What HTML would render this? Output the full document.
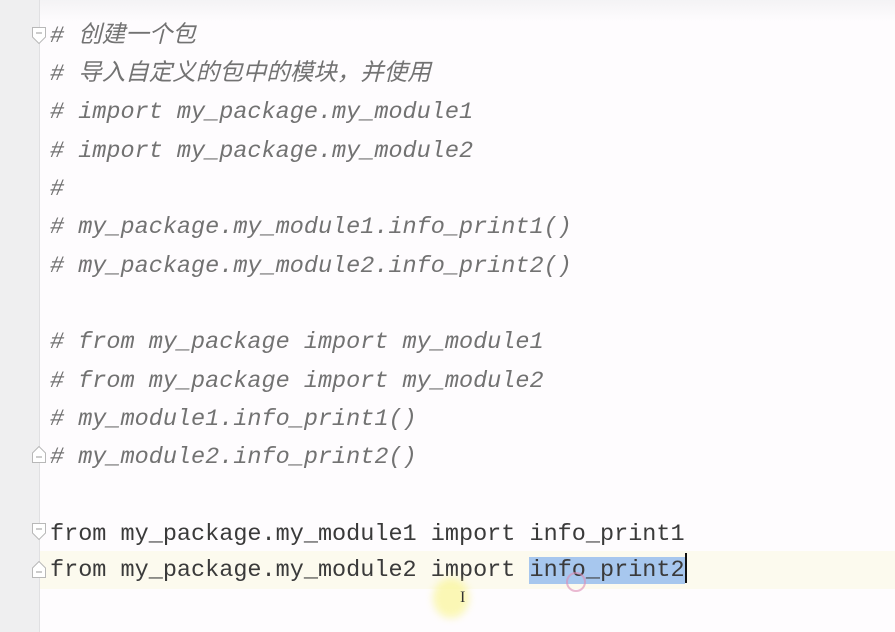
<!DOCTYPE html>
<html><head><meta charset="utf-8"><style>
html,body{margin:0;padding:0}
body{width:895px;height:632px;overflow:hidden;background:#fefcfe;position:relative;font-family:"Liberation Mono","Noto Sans CJK SC",monospace;}
.top{position:absolute;left:0;top:0;width:895px;height:22px;background:linear-gradient(#f4f3f5,#fefcfe)}
.gut{position:absolute;left:0;top:0;width:39px;height:632px;background:#efeff0;border-right:1px solid #e0e0e2}
.cur{position:absolute;left:40px;top:551px;width:855px;height:38px;background:#fcfaee}
.l{position:absolute;left:50px;height:38px;line-height:38px;font-size:23.5px;white-space:pre;color:#3a3a3a}
.c{color:#727272;font-style:italic}
.sel{background:#a7c7ee}
.caret{display:inline-block;width:2px;height:30px;background:#111;vertical-align:middle;margin-top:-4px}
.f{position:absolute;left:32px;width:14px;height:17px}
</style></head><body>
<div class="top"></div>
<div class="gut"></div>
<div class="cur"></div>
<svg class="f" style="top:27px" viewBox="0 0 14 17"><path d="M0.5 0.5H13.5V10L7 16.5L0.5 10Z" fill="#fff" stroke="#b8b8b8"/><path d="M4 6H10" stroke="#999"/></svg>
<svg class="f" style="top:446px" viewBox="0 0 14 17"><path d="M0.5 16.5H13.5V7L7 0.5L0.5 7Z" fill="#fff" stroke="#b8b8b8"/><path d="M4 11H10" stroke="#999"/></svg>
<svg class="f" style="top:523px" viewBox="0 0 14 17"><path d="M0.5 0.5H13.5V10L7 16.5L0.5 10Z" fill="#fff" stroke="#b8b8b8"/><path d="M4 6H10" stroke="#999"/></svg>
<svg class="f" style="top:561px" viewBox="0 0 14 17"><path d="M0.5 16.5H13.5V7L7 0.5L0.5 7Z" fill="#fff" stroke="#b8b8b8"/><path d="M4 11H10" stroke="#999"/></svg>
<div class="l c" style="top:18px"># 创建一个包</div>
<div class="l c" style="top:56px"># 导入自定义的包中的模块，并使用</div>
<div class="l c" style="top:94px"># import my_package.my_module1</div>
<div class="l c" style="top:133px"># import my_package.my_module2</div>
<div class="l c" style="top:171px">#</div>
<div class="l c" style="top:209px"># my_package.my_module1.info_print1()</div>
<div class="l c" style="top:248px"># my_package.my_module2.info_print2()</div>
<div class="l c" style="top:324px"># from my_package import my_module1</div>
<div class="l c" style="top:363px"># from my_package import my_module2</div>
<div class="l c" style="top:401px"># my_module1.info_print1()</div>
<div class="l c" style="top:439px"># my_module2.info_print2()</div>
<div class="l" style="top:516px">from my_package.my_module1 import info_print1</div>
<div class="l" style="top:551px;line-height:40px">from my_package.my_module2 import <span class="sel">info_print2</span><span class="caret"></span></div>
<div style="position:absolute;left:433px;top:578px;width:36px;height:40px;border-radius:50%;background:rgba(250,245,150,0.7);filter:blur(4px)"></div>
<div style="position:absolute;left:460px;top:589px;font-size:16px;color:#333;font-family:'Liberation Serif',serif">I</div>
<div style="position:absolute;left:566px;top:572px;width:20px;height:20px;border-radius:50%;border:2px solid rgba(220,140,180,0.6);box-sizing:border-box"></div>
</body></html>
